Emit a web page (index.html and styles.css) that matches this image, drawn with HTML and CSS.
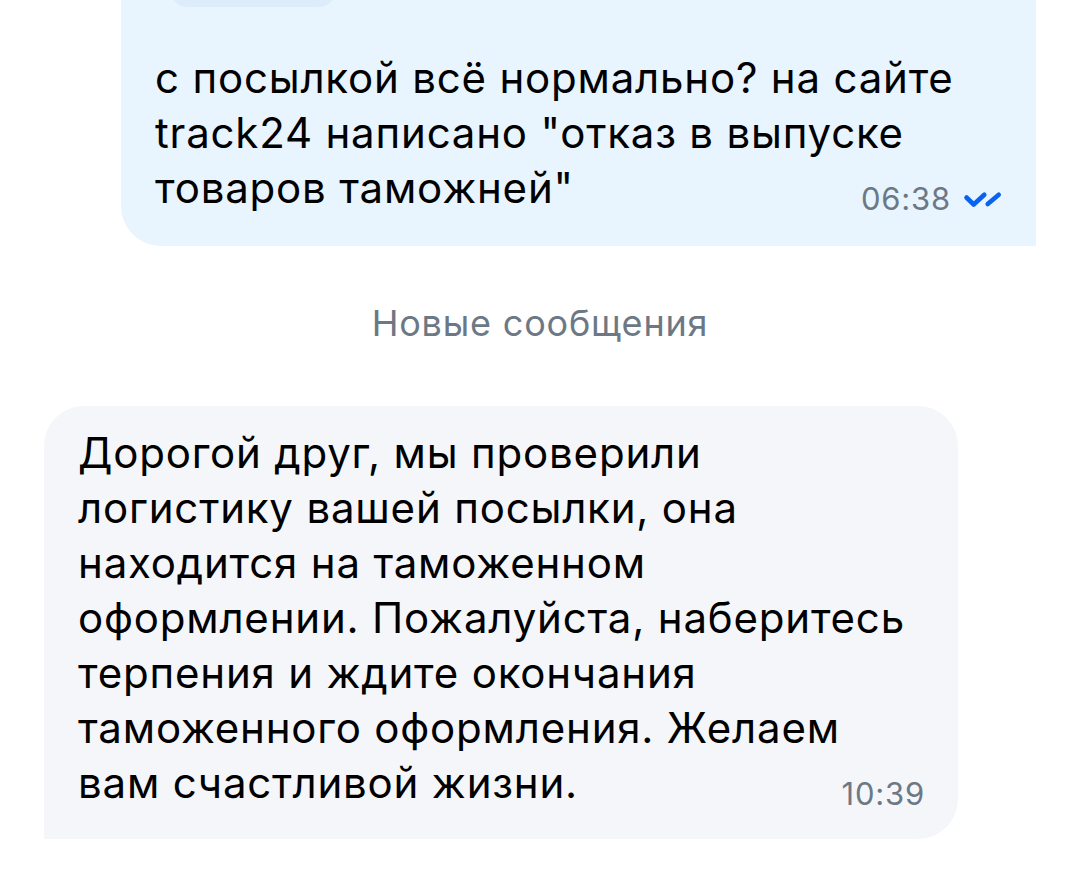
FILE: index.html
```html
<!DOCTYPE html>
<html lang="ru">
<head>
<meta charset="utf-8">
<link rel="stylesheet" href="styles.css">
</head>
<body>
<div class="chat">
  <div class="bubble bubble-out">
    <div class="reply"></div>
    <p class="text">с посылкой всё нормально? на сайте<br>track24 написано "отказ в выпуске<br>товаров таможней"<span class="meta">06:38<svg class="check" width="40" height="18" viewBox="0 0 40 18"><path d="M3.5 6.5 L10.7 13.5 L21.3 3.7 M24.7 13 L35.7 3.7" fill="none" stroke="#0a63f0" stroke-width="4.6" stroke-linecap="round" stroke-linejoin="round"/></svg></span></p>
  </div>
  <div class="separator">Новые сообщения</div>
  <div class="bubble bubble-in">
    <p class="text">Дорогой друг, мы проверили<br>логистику вашей посылки, она<br>находится на таможенном<br>оформлении. Пожалуйста, наберитесь<br>терпения и ждите окончания<br>таможенного оформления. Желаем<br>вам счастливой жизни.<span class="meta">10:39</span></p>
  </div>
</div>
</body>
</html>
```

FILE: styles.css
```css
html, body {
  margin: 0;
  background: #ffffff;
}
body {
  font-family: Inter, Roboto, "Noto Sans", sans-serif;
  color: #000;
  overflow: hidden;
  letter-spacing: 0.05em;
}
.chat {
  margin-top: -40px;
  padding: 0 44px;
}
.bubble {
  display: flow-root;
}
.bubble-out {
  margin-left: 77px;
  background: #e8f4fe;
  border-radius: 40px 40px 0 40px;
  padding: 12px 33px 29px 34px;
}
.reply {
  margin-left: 15px;
  width: 166px;
  height: 35px;
  border-radius: 24px;
  background: #ddecfa;
  margin-bottom: 43px;
}
.bubble-in {
  margin-right: 78px;
  background: #f4f6fa;
  border-radius: 40px 40px 40px 0;
  padding: 19px 33px 27px 34px;
}
.text {
  margin: 0;
  font-size: 42px;
  line-height: 55px;
}
.meta {
  float: right;
  display: flex;
  align-items: center;
  margin-top: 21px;
  font-size: 31px;
  line-height: 36px;
  color: #6d7885;
}
.check {
  margin-left: 12px;
  margin-top: 2px;
}
.separator {
  padding: 55px 0 61px;
  text-align: center;
  font-size: 36px;
  line-height: 44px;
  color: #6d7885;
}
```
